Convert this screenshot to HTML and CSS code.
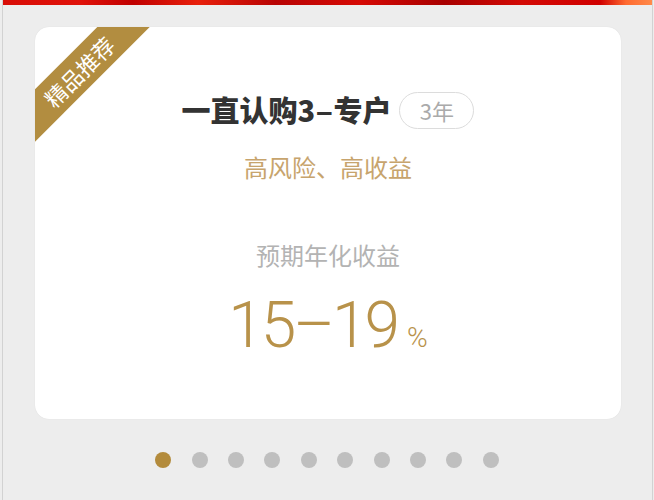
FILE: index.html
```html
<!DOCTYPE html>
<html lang="zh-CN">
<head>
<meta charset="utf-8">
<title>精品推荐</title>
<link rel="stylesheet" href="styles.css">
</head>
<body>
<div class="frame">
  <div class="banner"></div>
  <div class="card">
    <div class="ribbon">精品推荐</div>
    <div class="title-row">
      <h1 class="title">一直认购3<span class="dash">–</span>专户</h1>
      <span class="term">3年</span>
    </div>
    <p class="risk">高风险、高收益</p>
    <p class="label">预期年化收益</p>
    <p class="rate"><span class="rate-num">15–19</span><span class="rate-unit">%</span></p>
  </div>
  <div class="dots">
    <span class="dot active"></span>
    <span class="dot"></span>
    <span class="dot"></span>
    <span class="dot"></span>
    <span class="dot"></span>
    <span class="dot"></span>
    <span class="dot"></span>
    <span class="dot"></span>
    <span class="dot"></span>
    <span class="dot"></span>
  </div>
</div>
</body>
</html>
```
FILE: styles.css
```css
html, body {
  margin: 0;
  padding: 0;
  background: #ededed;
}
body {
  font-family: "Noto Sans CJK SC", "Noto Sans", sans-serif;
}
.frame {
  margin: 0 1px 0 2px;
  height: 500px;
  border-left: 1px solid #d2d2d2;
  border-right: 1px solid #d2d2d2;
  background: #ededed;
  overflow: hidden;
}
.banner {
  height: 5px;
  background: linear-gradient(90deg, #d80d06 0%, #e0120a 12%, #c00000 20%, #e8200c 30%, #b80404 42%, #d60a05 55%, #a80000 68%, #d30a05 80%, #d00000 92%, #ff6a30 96%, #ff8a4a 100%);
}
.card {
  position: relative;
  overflow: hidden;
  margin: 22px 0 0 32px;
  width: 586px;
  height: 392px;
  box-sizing: border-box;
  background: #fff;
  border-radius: 14px;
  box-shadow: 0 0 1px rgba(0,0,0,0.12);
  padding-top: 65px;
  text-align: center;
}
.ribbon {
  position: absolute;
  left: -56px;
  top: 26px;
  width: 200px;
  height: 37px;
  line-height: 37px;
  background: #b28d40;
  color: #fff;
  font-size: 22px;
  transform: rotate(-45deg);
  text-align: center;
}
.title-row {
  display: flex;
  justify-content: center;
  align-items: center;
  gap: 8px;
  height: 37px;
}
.title {
  margin: 0;
  font-size: 29px;
  font-weight: 900;
  color: #333;
  line-height: 37px;
}
.dash {
  font-family: "Liberation Sans", sans-serif;
  font-weight: 700;
  margin: 0 1px;
}
.term {
  box-sizing: border-box;
  width: 75px;
  height: 37px;
  line-height: 35px;
  border: 1px solid #dcdcdc;
  border-radius: 19px;
  color: #aaa;
  font-size: 22px;
}
.risk {
  margin: 22px 0 0;
  font-size: 24px;
  line-height: 32px;
  color: #c7a46d;
}
.label {
  margin: 56px 0 0;
  font-size: 24px;
  line-height: 32px;
  color: #b3b3b3;
}
.rate {
  margin: 23px 0 0;
  line-height: 64px;
  color: #b8924a;
  font-family: Roboto, "Noto Sans", sans-serif;
  font-weight: 300;
}
.rate-num {
  font-size: 64px;
  letter-spacing: -3px;
}
.rate-unit {
  font-size: 28px;
  margin-left: 10px;
}
.dots {
  display: flex;
  justify-content: center;
  gap: 20.4px;
  margin-top: 33px;
  padding-right: 1px;
}
.dot {
  width: 16px;
  height: 16px;
  border-radius: 50%;
  background: #bfbfbf;
}
.dot.active {
  background: #b38b3c;
}
```
